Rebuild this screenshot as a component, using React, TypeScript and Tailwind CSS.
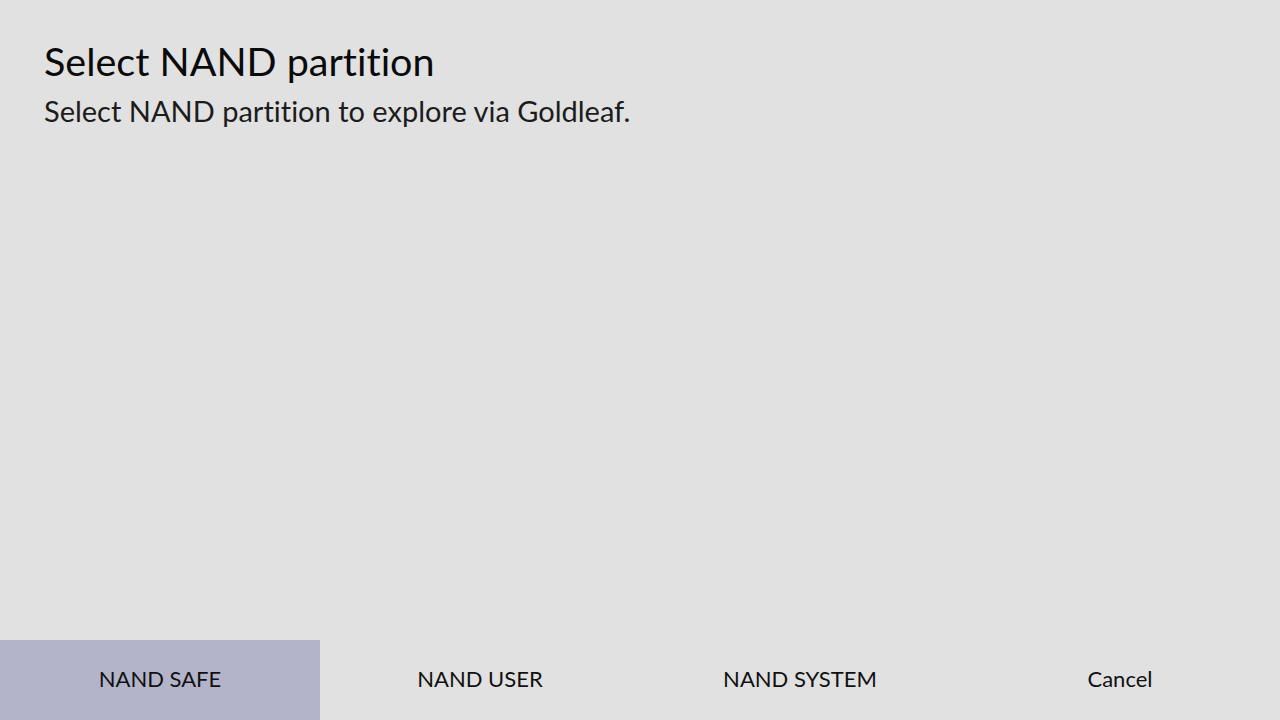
import React from "react";

const options = ["NAND SAFE", "NAND USER", "NAND SYSTEM", "Cancel"];

export default function App() {
  const selected = 0;

  return (
    <div
      className="w-[1280px] h-[720px] bg-[#e1e1e1] flex flex-col [font-variant-ligatures:none]"
      style={{ fontFamily: 'Lato, "Noto Sans", sans-serif' }}
    >
      <div className="flex-1 pl-[44px] pt-[36px]">
        <div className="text-[39.5px] leading-[50px] text-[#0a0a0a]">Select NAND partition</div>
        <div className="text-[29px] leading-[50px] text-[#1c1c1c]">
          Select NAND partition to explore via Goldleaf.
        </div>
      </div>
      <div className="grid grid-cols-4 h-[80px]">
        {options.map((o, i) => (
          <div
            key={o}
            className={
              "flex items-center justify-center pb-[4px] text-[22px] text-[#111111] " +
              (i === selected ? "bg-[#b3b4c9]" : "")
            }
          >
            {o}
          </div>
        ))}
      </div>
    </div>
  );
}
